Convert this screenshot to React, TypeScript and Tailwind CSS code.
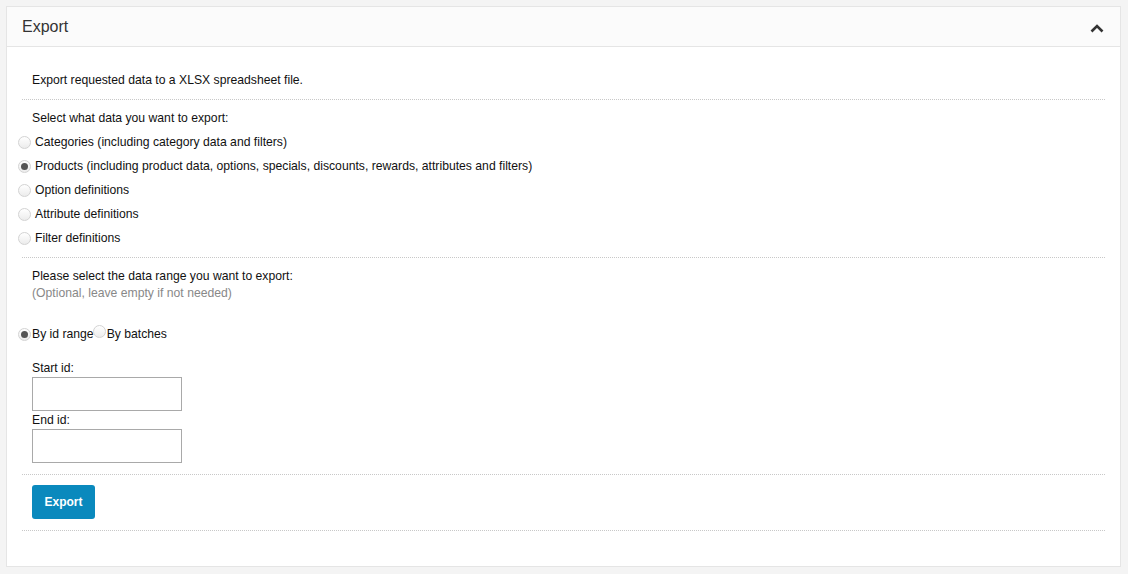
const Radio = ({ checked = false }: { checked?: boolean }) => (
  <span className="inline-flex h-[13px] w-[13px] shrink-0 items-center justify-center rounded-full border border-[#d3d3d3] bg-gradient-to-b from-[#ffffff] to-[#ececec]">
    {checked && <span className="h-[7px] w-[7px] rounded-full bg-[#555555]" />}
  </span>
);

const options = [
  "Categories (including category data and filters)",
  "Products (including product data, options, specials, discounts, rewards, attributes and filters)",
  "Option definitions",
  "Attribute definitions",
  "Filter definitions",
];

const App = () => {
  return (
    <div className="min-h-[574px] bg-[#f4f4f4] pl-[6px] pt-[6px] font-['Liberation_Sans',Arial,sans-serif] text-[12.2px] text-[#111]">
      <div className="w-[1115px] border border-[#e5e5e5] bg-white">
        <div className="flex h-[40px] items-center justify-between border-b border-[#e5e5e5] bg-[#fbfbfb] pl-[15px] pr-[16px]">
          <h3 className="text-[16px] text-[#333]">Export</h3>
          <svg width="14" height="10" viewBox="0 0 14 10" className="mt-[2px]">
            <path d="M1.5 8.5 L7 3 L12.5 8.5" fill="none" stroke="#333" strokeWidth="2.6" />
          </svg>
        </div>

        <div className="px-[15px] pb-[35px]">
          <div className="border-b border-dotted border-[#c8c8c8] pb-[10px] pl-[10px] pt-[25px] leading-[17px]">
            Export requested data to a XLSX spreadsheet file.
          </div>

          <div className="border-b border-dotted border-[#c8c8c8] pb-[7px] pl-[10px] pt-[10px] leading-[17px]">
            <p>Select what data you want to export:</p>
            <div className="mt-[3px]">
              {options.map((o, i) => (
                <label key={o} className="ml-[-14px] flex h-[24px] items-center gap-[4px]">
                  <Radio checked={i === 1} />
                  <span>{o}</span>
                </label>
              ))}
            </div>
          </div>

          <div className="border-b border-dotted border-[#c8c8c8] pb-[11px] pl-[10px] pt-[10px] leading-[17px]">
            <p>Please select the data range you want to export:</p>
            <p className="text-[#888]">(Optional, leave empty if not needed)</p>
            <div className="ml-[-14px] mt-[20px] flex h-[24px] items-center">
              <Radio checked />
              <span className="ml-[1px]">By id range</span>
              <span className="relative ml-[-1px]">
                <Radio />
              </span>
              <span className="ml-[1px]">By batches</span>
            </div>
            <div className="mt-[14px]">
              <p>Start id:</p>
              <input className="block h-[34px] w-[150px] border border-[#a9a9a9] px-[6px] outline-none" />
              <p className="mt-[1px]">End id:</p>
              <input className="block h-[34px] w-[150px] border border-[#a9a9a9] px-[6px] outline-none" />
            </div>
          </div>

          <div className="border-b border-dotted border-[#c8c8c8] pb-[11px] pl-[10px] pt-[10px]">
            <button className="h-[34px] w-[63px] rounded-[3px] bg-[#0a89bd] text-[12px] font-bold text-white">
              Export
            </button>
          </div>
        </div>
      </div>
    </div>
  );
};

export default App;
